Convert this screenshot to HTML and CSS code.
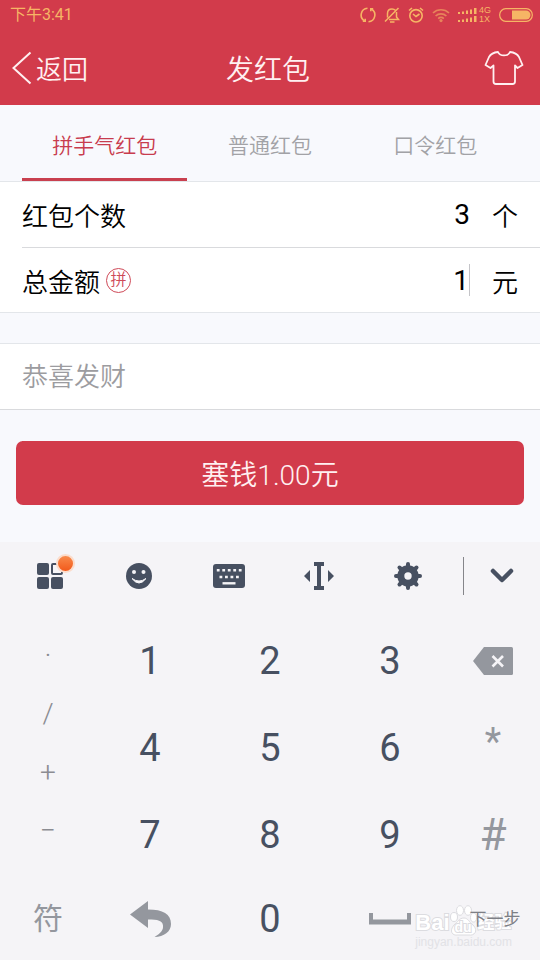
FILE: index.html
```html
<!DOCTYPE html>
<html lang="zh-CN">
<head>
    <meta charset="UTF-8">
    <meta name="viewport" content="width=device-width, initial-scale=1.0">
    <title>发红包</title>
    <link rel="stylesheet" href="styles.css">
</head>
<body>
    <header>
        <div class="status-bar">
            <span class="time">下午3:41</span>
            <div class="status-icons">
                <svg width="16" height="16" viewBox="0 0 16 16" fill="none" stroke="currentColor" stroke-width="1.6">
                    <path d="M7.500 1.200A6.800 6.800 0 0 0 4.800 14M8.500 14.800A6.800 6.800 0 0 0 11.200 2"/>
                    <path d="M2.800 14.300h2.400v-2.600M13.200 1.700h-2.400v2.600"/>
                </svg>
                <svg width="16" height="16" viewBox="0 0 16 16" fill="none" stroke="currentColor" stroke-width="1.500">
                    <path d="M1 14.500L14.500 1M3.500 10.500V6.500C3.500 3.500 5.500 2 8 2c1.500 0 2.700.500 3.500 1.400M12.500 5v5l2 2.500H5M6 15h4.500"/>
                </svg>
                <svg width="16" height="16" viewBox="0 0 16 16" fill="none" stroke="currentColor" stroke-width="1.6">
                    <circle cx="8" cy="8.800" r="6.200"/>
                    <path d="M5 7l3 2.500L11.500 7M1 3.500L4 1M15 3.500L12 1"/>
                </svg>
                <svg class="wifi" width="18" height="16" viewBox="0 0 18 16" fill="none" stroke="currentColor" stroke-width="1.700">
                    <path d="M1 6a11.500 11.500 0 0 1 16 0M3.600 9a7.800 7.800 0 0 1 10.800 0M6.200 11.600a4 4 0 0 1 5.600 0"/>
                    <circle class="wifi-dot" cx="9" cy="13.600" r="1.600"/>
                </svg>
                <div class="signal">
                    <svg width="19" height="16" viewBox="0 0 19 16" fill="currentColor">
                        <path d="M0 5h2v2H0zM4 4.500h2V7H4zM8 3.500h2V7H8zM12 2.500h2V7h-2zM16 1h2.500v6H16z"/>
                        <path d="M0 13h2v2H0zM4 12.500h2V15H4zM8 11.500h2V15H8zM12 10.500h2V15h-2zM16 9h2.500v6H16z"/>
                    </svg>
                    <div class="network">
                        <span>4G</span>
                        <span>1X</span>
                    </div>
                </div>
                <svg width="34" height="14" viewBox="0 0 34 14">
                    <rect x="0.7" y="0.7" width="32.600" height="12.600" rx="6" fill="none" stroke="currentColor" stroke-width="1.200"/>
                    <path d="M13 2.500h14a4.500 4.500 0 0 1 0 9H13z" fill="currentColor"/>
                </svg>
            </div>
        </div>
        <nav>
            <a class="back" href="#">
                <svg width="20" height="34" viewBox="0 0 20 34" fill="none" stroke="currentColor" stroke-width="2">
                    <path d="M18.500 1.500L1.500 17L18.500 32.500"/>
                </svg>
                返回
            </a>
            <h1>发红包</h1>
            <button class="skin" type="button" aria-label="皮肤">
                <svg width="40" height="36" viewBox="0 0 40 36" fill="none" stroke="currentColor" stroke-width="1.800" stroke-linejoin="round">
                    <path d="M14 2C16 6.500 24 6.500 26 2C31 2.500 33 3.500 35 7L38.500 15L33.500 18L31 15.500V31.500Q31 34 28.500 34H12Q9.500 34 9.500 31.500V15.500L6.500 18L1.500 15L5 7C7 3.500 9 2.500 14 2Z"/>
                </svg>
            </button>
        </nav>
    </header>

    <main>
        <div class="tabs">
            <a class="tab active" href="#">拼手气红包</a>
            <a class="tab" href="#">普通红包</a>
            <a class="tab" href="#">口令红包</a>
        </div>

        <form id="packetForm">
            <div class="group">
                <div class="row">
                    <label for="count">红包个数</label>
                    <input type="text" id="count" name="count" value="3">
                    <span class="unit">个</span>
                </div>
                <div class="row">
                    <label for="amount">总金额</label>
                    <span class="pin">拼</span>
                    <input class="editing" type="text" id="amount" name="amount" value="1">
                    <span class="unit">元</span>
                </div>
            </div>

            <input class="message" type="text" name="message" placeholder="恭喜发财" aria-label="恭喜发财">

            <button class="submit" type="submit">塞钱1.00元</button>
        </form>
    </main>

    <section class="keyboard">
        <div class="toolbar">
            <button type="button" class="tool" aria-label="菜单">
                <span class="menu-icon">
                    <svg width="26" height="26" viewBox="0 0 26 26" fill="currentColor">
                        <rect width="12" height="12" rx="2"/>
                        <rect y="14" width="12" height="12" rx="2"/>
                        <rect x="14" y="14" width="12" height="12" rx="2"/>
                        <rect x="15" y="1" width="10" height="10" rx="1" fill="none" stroke="currentColor" stroke-width="2"/>
                    </svg>
                    <span class="badge"></span>
                </span>
            </button>
            <button type="button" class="tool" aria-label="表情">
                <svg width="26" height="26" viewBox="0 0 26 26">
                    <circle cx="13" cy="13" r="13" fill="currentColor"/>
                    <circle cx="8" cy="9" r="2" fill="#f5f4f7"/>
                    <circle cx="17.500" cy="9" r="2" fill="#f5f4f7"/>
                    <path d="M6 15.500Q13 24.500 20 15.500Q13 20.500 6 15.500Z" fill="#f5f4f7" stroke="#f5f4f7" stroke-linejoin="round"/>
                </svg>
            </button>
            <button type="button" class="tool" aria-label="键盘">
                <svg width="32" height="24" viewBox="0 0 32 24">
                    <rect width="32" height="24" rx="3" fill="currentColor"/>
                    <path d="M3.800 6.300h25M6.500 13h20" stroke="#f5f4f7" stroke-width="2.600" stroke-dasharray="2.800 2.700"/>
                    <path d="M9.500 19.300h13" stroke="#f5f4f7" stroke-width="2.400"/>
                </svg>
            </button>
            <button type="button" class="tool" aria-label="光标">
                <svg width="30" height="28" viewBox="0 0 30 28" fill="currentColor">
                    <path d="M10 0h10v4h-3v20h3v4H10v-4h3V4h-3zM6 8v12L0 14zM24 8v12l6-6z"/>
                </svg>
            </button>
            <button type="button" class="tool" aria-label="设置">
                <svg width="28" height="28" viewBox="0 0 28 28">
                    <circle cx="14" cy="14" r="7.200" fill="none" stroke="currentColor" stroke-width="7"/>
                    <path d="M14 2v3M14 23v3M2 14h3M23 14h3M5.500 5.500l2 2M20.500 20.500l2 2M5.500 22.500l2-2M20.500 7.500l2-2" stroke="currentColor" stroke-width="4" stroke-linecap="round"/>
                </svg>
            </button>
            <button type="button" class="tool hide" aria-label="收起">
                <svg width="24" height="16" viewBox="0 0 24 16" fill="none" stroke="currentColor" stroke-width="4.500" stroke-linecap="round" stroke-linejoin="round">
                    <path d="M3 3L12 12L21 3"/>
                </svg>
            </button>
        </div>

        <div class="keys">
            <div class="symbols">
                <button type="button">·</button>
                <button type="button">/</button>
                <button type="button">+</button>
                <button type="button">−</button>
            </div>
            <button type="button">1</button>
            <button type="button">2</button>
            <button type="button">3</button>
            <button type="button" class="side" aria-label="删除">
                <svg width="40" height="28" viewBox="0 0 40 28">
                    <path d="M11 0H38.500Q40 0 40 1.500V26.500Q40 28 38.500 28H11L0 14Z" fill="currentColor"/>
                    <path d="M19.500 9L30 19.500M30 9L19.500 19.500" stroke="#f5f4f7" stroke-width="2.600"/>
                </svg>
            </button>
            <button type="button">4</button>
            <button type="button">5</button>
            <button type="button">6</button>
            <button type="button" class="side star">*</button>
            <button type="button">7</button>
            <button type="button">8</button>
            <button type="button">9</button>
            <button type="button" class="side hash">#</button>
            <button type="button" class="char">符</button>
            <button type="button" class="icon-key" aria-label="返回">
                <svg width="41" height="36" viewBox="0 0 41 36" fill="currentColor">
                    <path d="M0 13.500L18 0V8.500C33 8.500 41 13 41 23C41 31 34 35.500 24.500 36C31 32 33.500 29 33 24.500C32.500 19.500 28 18.500 18 18.500V27Z"/>
                </svg>
            </button>
            <button type="button">0</button>
            <button type="button" class="icon-key" aria-label="空格">
                <svg width="42" height="12" viewBox="0 0 42 12" fill="currentColor">
                    <path d="M0 0h4v6.500h34V0h4v11.500H0z"/>
                </svg>
            </button>
            <button type="button" class="next">下一步</button>
        </div>

        <div class="watermark">
            <div class="brand">
                <span>Bai</span>
                <span class="paw">
                    <svg width="27" height="31" viewBox="0 0 27 31" fill="#fff" stroke="#dcdce0">
                        <ellipse cx="4" cy="12" rx="3.500" ry="4.500"/>
                        <ellipse cx="10" cy="5.500" rx="3.500" ry="4.800"/>
                        <ellipse cx="18" cy="5.500" rx="3.500" ry="4.800"/>
                        <ellipse cx="23.500" cy="12.500" rx="3" ry="4.500"/>
                        <path d="M14 13C18 13 19 17 23 20C29 26 24 31 19 30H8C2 31-1 26 4 20C8 17 9 13 14 13Z"/>
                    </svg>
                    <span class="du">du</span>
                </span>
                <span class="cn">经验</span>
            </div>
            <div class="url">jingyan.baidu.com</div>
        </div>
    </section>
</body>
</html>
```

FILE: styles.css
```css
* {
    box-sizing: border-box;
}
body {
    margin: 0;
    min-height: 100vh;
    display: flex;
    flex-direction: column;
    font-family: Roboto, "Noto Sans CJK SC", sans-serif;
    font-weight: 350;
    background-color: #f8f9fd;
    color: #000;
}
button,
input {
    font-family: inherit;
    font-weight: inherit;
    border: none;
    background: none;
    padding: 0;
    margin: 0;
    border-radius: 0;
    outline: none;
}
a {
    text-decoration: none;
}
svg {
    display: block;
}

/* Red top area */
header {
    background-color: #d23b4b;
    color: #fff0f1;
}
.status-bar {
    display: flex;
    justify-content: space-between;
    align-items: center;
    height: 30px;
    padding: 0 7px 0 10px;
    color: #f6b565;
}
.time {
    font-size: 16px;
    font-weight: 400;
    line-height: 30px;
}
.status-icons {
    display: flex;
    align-items: center;
    gap: 8px;
}
.wifi {
    opacity: 0.6;
}
.wifi-dot {
    fill: currentColor;
    stroke: none;
}
.signal {
    display: flex;
    align-items: center;
    gap: 2px;
}
.network {
    display: flex;
    flex-direction: column;
    font-family: "Liberation Sans", sans-serif;
    font-size: 9px;
    font-weight: 400;
    line-height: 9px;
}
nav {
    display: grid;
    grid-template-columns: 1fr auto 1fr;
    align-items: center;
    height: 75px;
    padding: 0 16px 0 12px;
}
.back {
    display: flex;
    align-items: center;
    gap: 4px;
    font-size: 26px;
    color: inherit;
}
h1 {
    margin: 0;
    font-size: 28px;
    font-weight: 350;
}
.skin {
    justify-self: end;
    color: inherit;
}

/* Tabs */
.tabs {
    display: flex;
    height: 77px;
    padding: 0 22px;
    border-bottom: 1px solid #e3e6ea;
}
.tab {
    flex: 1;
    padding-top: 4px;
    border-bottom: 3px solid transparent;
    font-size: 21px;
    line-height: 74px;
    text-align: center;
    color: #a2a2a6;
}
.tab.active {
    color: #c83c4e;
    border-bottom-color: #c9404f;
}

/* Form */
.group {
    padding-left: 22px;
    background-color: #fff;
    border-bottom: 1px solid #e3e6ea;
}
.row {
    display: flex;
    align-items: center;
    height: 65px;
    padding-right: 22px;
    font-size: 26px;
}
.row + .row {
    border-top: 1px solid #d9dadd;
}
.row label {
    flex: none;
}
.row input {
    flex: 1;
    min-width: 0;
    height: 32px;
    font-size: 28px;
    font-weight: 400;
    text-align: right;
    color: #000;
}
.row input.editing {
    border-right: 1px solid #c4c4c8;
}
.unit {
    margin-left: 22px;
}
.pin {
    width: 25px;
    height: 25px;
    margin-left: 6px;
    border: 1px solid #cf4a58;
    border-radius: 50%;
    font-size: 16px;
    line-height: 22px;
    text-align: center;
    color: #cf4a58;
}
.message {
    display: block;
    width: 100%;
    height: 67px;
    margin-top: 30px;
    padding: 0 22px;
    background-color: #fff;
    border-top: 1px solid #e3e6ea;
    border-bottom: 1px solid #d9dadd;
    font-size: 26px;
}
.message::placeholder {
    color: #9c9ca0;
}
.submit {
    display: block;
    width: calc(100% - 32px);
    height: 64px;
    margin: 31px 16px 37px;
    background-color: #d23b4b;
    border-radius: 7px;
    font-size: 28px;
    color: #fff0f1;
}

/* Keyboard */
.keyboard {
    position: relative;
    flex: 1;
    display: flex;
    flex-direction: column;
    background-color: #f5f4f7;
    color: #475061;
}
.toolbar {
    display: flex;
    align-items: center;
    height: 68px;
    padding-left: 5px;
}
.tool {
    flex: 1;
    display: flex;
    justify-content: center;
    align-items: center;
    height: 38px;
    color: inherit;
}
.tool.hide {
    margin-left: 10px;
    flex: 0 0 77px;
    border-left: 1px solid #85858a;
}
.menu-icon {
    position: relative;
}
.badge {
    position: absolute;
    top: -9px;
    right: -12px;
    width: 19px;
    height: 19px;
    border: 2px solid #fbdccb;
    border-radius: 50%;
    background: linear-gradient(#f98a4b, #f25a1c);
}
/* Keys stay above the watermark */
.keys {
    position: relative;
    z-index: 1;
    flex: 1;
    display: grid;
    grid-template-columns: 3fr 4fr 4fr 4fr 3fr;
    grid-template-rows: 87fr 87fr 87fr 82fr;
    padding-top: 7px;
}
.keys button {
    display: flex;
    justify-content: center;
    align-items: center;
    font-size: 38px;
    font-weight: 400;
    line-height: 40px;
    color: inherit;
}
.symbols {
    grid-row: 1 / 4;
    display: flex;
    flex-direction: column;
    padding: 10px 0 18px 6px;
}
.keys .symbols button {
    flex: 1;
    font-size: 28px;
    font-weight: 300;
    color: #8b8c92;
}
.keys .side,
.keys .icon-key,
.keys .char,
.keys .next {
    color: #94979e;
}
.keys .side {
    padding-right: 4px;
}
.keys .star {
    padding-bottom: 12px;
}
.keys .hash {
    font-size: 44px;
}
.keys .char {
    padding-left: 6px;
    font-size: 30px;
}
.keys .next {
    font-size: 17px;
    color: #7d7f85;
}

/* Watermark */
.watermark {
    position: absolute;
    right: 28px;
    bottom: 12px;
    font-family: "Liberation Sans", "Noto Sans CJK SC", sans-serif;
    color: #fff;
    pointer-events: none;
}
.brand {
    display: flex;
    align-items: flex-end;
    font-size: 22px;
    font-weight: bold;
    line-height: 26px;
    -webkit-text-stroke: 2px #dcdce0;
    paint-order: stroke fill;
}
.paw {
    position: relative;
}
.paw svg {
    paint-order: normal;
}
.du {
    position: absolute;
    left: 5px;
    bottom: 0;
    font-size: 14px;
    line-height: 18px;
}
.cn {
    margin-left: 1px;
    font-size: 17px;
}
.url {
    font-size: 12px;
    font-weight: 400;
    line-height: 12px;
    color: #e2e2e6;
}
```
